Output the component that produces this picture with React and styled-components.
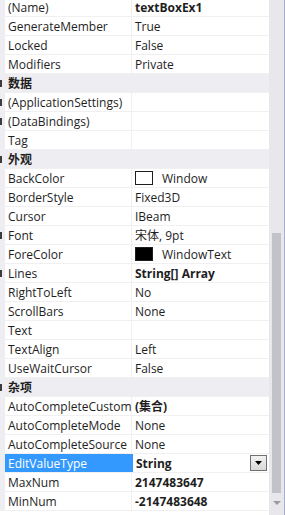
import React from 'react';
import styled, { createGlobalStyle } from 'styled-components';

const GlobalStyle = createGlobalStyle`
  html, body { margin: 0; padding: 0; background: #fff; }
  body {
    font-family: "Open Sans", "Noto Sans CJK SC", sans-serif;
    font-size: 12px;
    color: #1e1e1e;
    overflow: hidden;
  }
`;

const Frame = styled.div`
  display: flex;
  width: 285px;
  height: 515px;
  overflow: hidden;
`;

const Grid = styled.div`
  flex: 1;
  display: flex;
  flex-direction: column;
  margin-top: -2px;
  background: #fff;
`;

const Row = styled.div`
  display: grid;
  grid-template-columns: 5px 127px 1fr;
  height: 18px;
  flex: none;
  border-bottom: 1px solid #f0f0f0;
  background: ${({ $category }) => ($category ? '#eeeef2' : '#fff')};
`;

const Gutter = styled.div`
  background: #eeeef2;
  display: flex;
  align-items: center;
  &::before {
    content: '';
    display: ${({ $mark }) => ($mark ? 'block' : 'none')};
    width: 2px;
    height: 7px;
    background: #3c3c3c;
  }
`;

const Name = styled.div`
  display: flex;
  align-items: center;
  padding-left: 3px;
  white-space: nowrap;
  overflow: hidden;
  border-right: 1px solid ${({ $category }) => ($category ? 'transparent' : '#f0f0f0')};
  background: ${({ $selected }) => ($selected ? '#3399ff' : 'transparent')};
  color: ${({ $selected }) => ($selected ? '#fff' : '#1e1e1e')};
  font-weight: ${({ $category }) => ($category ? 700 : 400)};
`;

const Value = styled.div`
  display: flex;
  align-items: center;
  padding-left: 3px;
  padding-right: 2px;
  white-space: nowrap;
  overflow: hidden;
  font-weight: ${({ $bold }) => ($bold ? 700 : 400)};
  border-left: ${({ $selected }) => ($selected ? '2px solid #3399ff' : '0')};
  margin-left: ${({ $selected }) => ($selected ? '-1px' : '0')};
`;

const Swatch = styled.span`
  width: 18px;
  height: 14px;
  border: 1px solid #1e1e1e;
  background: ${({ $color }) => $color};
  margin-right: 9px;
  flex: none;
  box-sizing: border-box;
`;

const ValueText = styled.span`
  flex: 1;
`;

const DropButton = styled.span`
  width: 17px;
  height: 16px;
  box-sizing: border-box;
  border: 1px solid #707070;
  background: linear-gradient(#f2f2f2, #d8d8d8);
  display: flex;
  align-items: center;
  justify-content: center;
  flex: none;
`;

const ScrollBar = styled.div`
  width: 16px;
  flex: none;
  background: #e8e8ec;
  border-right: 1px solid #a8acd0;
  display: flex;
  flex-direction: column;
  align-items: center;
  padding-top: 233px;
  box-sizing: border-box;
`;

const Thumb = styled.div`
  width: 9px;
  height: 260px;
  background: #c2c3c9;
`;

const ArrowDown = styled.div`
  margin-top: 8px;
  width: 0;
  height: 0;
  border-left: 4px solid transparent;
  border-right: 4px solid transparent;
  border-top: 4px solid #9a9aa2;
`;

const rows = [
  { name: '(Name)', value: 'textBoxEx1', bold: true },
  { name: 'GenerateMember', value: 'True' },
  { name: 'Locked', value: 'False' },
  { name: 'Modifiers', value: 'Private' },
  { category: '数据', mark: true },
  { name: '(ApplicationSettings)', value: '', mark: true },
  { name: '(DataBindings)', value: '', mark: true },
  { name: 'Tag', value: '' },
  { category: '外观', mark: true },
  { name: 'BackColor', value: 'Window', swatch: '#fff' },
  { name: 'BorderStyle', value: 'Fixed3D' },
  { name: 'Cursor', value: 'IBeam' },
  { name: 'Font', value: '宋体, 9pt', mark: true },
  { name: 'ForeColor', value: 'WindowText', swatch: '#000' },
  { name: 'Lines', value: 'String[] Array', bold: true, mark: true },
  { name: 'RightToLeft', value: 'No' },
  { name: 'ScrollBars', value: 'None' },
  { name: 'Text', value: '' },
  { name: 'TextAlign', value: 'Left' },
  { name: 'UseWaitCursor', value: 'False' },
  { category: '杂项', mark: true },
  { name: 'AutoCompleteCustomSource', value: '(集合)', bold: true },
  { name: 'AutoCompleteMode', value: 'None' },
  { name: 'AutoCompleteSource', value: 'None' },
  { name: 'EditValueType', value: 'String', bold: true, selected: true, drop: true },
  { name: 'MaxNum', value: '2147483647', bold: true },
  { name: 'MinNum', value: '-2147483648', bold: true },
];

const PropertyRow = ({ row }) => {
  if (row.category) {
    return (
      <Row $category>
        <Gutter $mark={row.mark} />
        <Name $category>{row.category}</Name>
        <Value />
      </Row>
    );
  }
  return (
    <Row>
      <Gutter $mark={row.mark} />
      <Name $selected={row.selected}>{row.name}</Name>
      <Value $bold={row.bold} $selected={row.selected}>
        {row.swatch && <Swatch $color={row.swatch} />}
        <ValueText>{row.value}</ValueText>
        {row.drop && (
          <DropButton>
            <svg width="7" height="4" viewBox="0 0 7 4">
              <path d="M0 0h7L3.5 4z" fill="#000" />
            </svg>
          </DropButton>
        )}
      </Value>
    </Row>
  );
};

const App = () => (
  <>
    <GlobalStyle />
    <Frame>
      <Grid>
        {rows.map((row, i) => (
          <PropertyRow key={i} row={row} />
        ))}
      </Grid>
      <ScrollBar>
        <Thumb />
        <ArrowDown />
      </ScrollBar>
    </Frame>
  </>
);

export default App;
